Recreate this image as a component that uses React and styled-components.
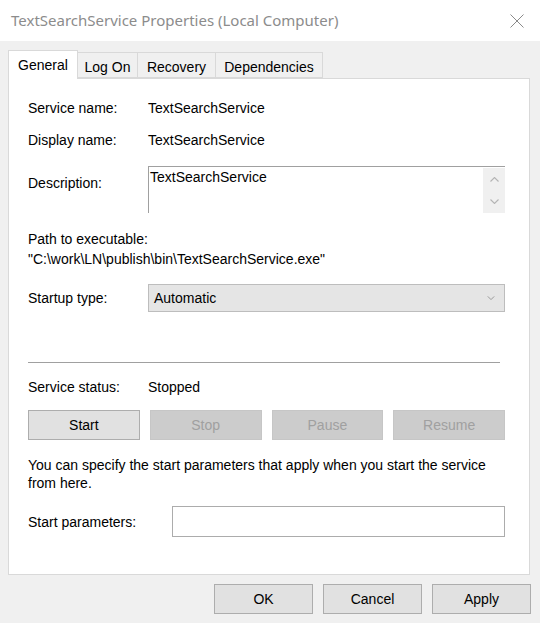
import React from "react";
import styled, { createGlobalStyle } from "styled-components";

const GlobalStyle = createGlobalStyle`
  html, body {
    margin: 0;
    padding: 0;
    background: #f0f0f0;
  }
  body {
    font-family: "Liberation Sans", Arial, sans-serif;
    font-size: 14px;
    color: #000;
  }
  * { box-sizing: border-box; }
`;

const Window = styled.div`
  width: 540px;
  height: 623px;
  background: #f0f0f0;
  display: flex;
  flex-direction: column;
  overflow: hidden;
`;

const TitleBar = styled.div`
  height: 41px;
  flex: none;
  background: #fff;
  display: flex;
  align-items: center;
  justify-content: space-between;
  padding: 0 16px 0 11px;
`;

const Title = styled.span`
  font-family: "Noto Sans", "Open Sans", sans-serif;
  font-size: 15px;
  color: #8c8c8c;
  padding-bottom: 1px;
`;

const CloseIcon = styled.svg`
  width: 14px;
  height: 14px;
  display: block;
`;

const Body = styled.div`
  padding: 9px 10px 0 8px;
`;

const TabStrip = styled.div`
  display: flex;
  align-items: flex-end;
  height: 28px;
`;

const Tab = styled.div`
  position: relative;
  width: ${(p) => p.$width}px;
  height: ${(p) => (p.$active ? 29 : 26)}px;
  margin-bottom: ${(p) => (p.$active ? -1 : 0)}px;
  margin-left: ${(p) => (p.$first ? 0 : -1)}px;
  padding-top: ${(p) => (p.$active ? 0 : 3)}px;
  z-index: ${(p) => (p.$active ? 2 : 1)};
  display: flex;
  align-items: center;
  justify-content: center;
  background: ${(p) => (p.$active ? "#fff" : "#f0f0f0")};
  border: 1px solid #d9d9d9;
  border-bottom: ${(p) => (p.$active ? "none" : "1px solid #d9d9d9")};
  white-space: nowrap;
`;

const Panel = styled.div`
  height: 497px;
  background: #fff;
  border: 1px solid #d9d9d9;
  padding: 21px 24px 0 19px;
  display: flex;
  flex-direction: column;
`;

const Field = styled.div`
  display: grid;
  grid-template-columns: ${(p) => p.$label || 120}px 1fr;
  align-items: ${(p) => (p.$top ? "start" : "center")};
  margin-top: ${(p) => p.$gap || 0}px;
  line-height: 16px;
`;

const Label = styled.span`
  padding-top: ${(p) => p.$offset || 0}px;
`;

const TextBlock = styled.div`
  margin-top: ${(p) => p.$gap || 0}px;
  line-height: ${(p) => p.$line || 16}px;
`;

const Memo = styled.div`
  height: 47px;
  display: flex;
  border-top: 1px solid #a0a0a0;
  border-left: 1px solid #a0a0a0;
  background: #fff;
`;

const MemoText = styled.div`
  flex: 1;
  padding: 2px 1px;
  line-height: 16px;
`;

const ScrollBar = styled.div`
  width: 22px;
  margin-top: 1px;
  background: #f0f0f0;
  display: flex;
  flex-direction: column;
`;

const ScrollButton = styled.div`
  flex: 1;
  display: flex;
  align-items: center;
  justify-content: center;
`;

const Chevron = styled.svg`
  width: ${(p) => p.$size || 9}px;
  height: ${(p) => Math.round((p.$size || 9) / 2)}px;
  display: block;
`;

const Combo = styled.div`
  height: 28px;
  display: flex;
  align-items: center;
  justify-content: space-between;
  padding: 0 9px 0 5px;
  background: #e5e5e5;
  border: 1px solid #bdbdbd;
`;

const Separator = styled.div`
  margin-top: ${(p) => p.$gap}px;
  margin-right: 5px;
  border-top: 1px solid #a0a0a0;
`;

const ButtonRow = styled.div`
  display: grid;
  grid-template-columns: repeat(4, 1fr);
  gap: 10px;
  margin-top: ${(p) => p.$gap}px;
`;

const Button = styled.button`
  height: 30px;
  width: ${(p) => (p.$width ? `${p.$width}px` : "auto")};
  font-family: "Liberation Sans", Arial, sans-serif;
  font-size: 14px;
  padding: 0;
  color: ${(p) => (p.disabled ? "#a0a0a0" : "#000")};
  background: ${(p) => (p.disabled ? "#cccccc" : "#e1e1e1")};
  border: 1px solid ${(p) => (p.disabled ? "#c6c6c6" : "#adadad")};
  border-radius: 0;
`;

const Input = styled.div`
  height: 31px;
  background: #fff;
  border: 1px solid #acacac;
`;

const Footer = styled.div`
  display: flex;
  justify-content: flex-end;
  gap: 10px;
  padding: 9px 9px 0 0;
`;

const tabs = [
  { name: "General", width: 70 },
  { name: "Log On", width: 61 },
  { name: "Recovery", width: 79 },
  { name: "Dependencies", width: 108 },
];

function ChevronUp() {
  return (
    <Chevron viewBox="0 0 9 5">
      <polyline points="0.5,4.5 4.5,0.5 8.5,4.5" fill="none" stroke="#b4b4b4" strokeWidth="1.1" />
    </Chevron>
  );
}

function ChevronDown({ color = "#b4b4b4", size }) {
  return (
    <Chevron viewBox="0 0 9 5" $size={size}>
      <polyline points="0.5,0.5 4.5,4.5 8.5,0.5" fill="none" stroke={color} strokeWidth="1.1" />
    </Chevron>
  );
}

export default function App() {
  return (
    <Window>
      <GlobalStyle />
      <TitleBar>
        <Title>TextSearchService Properties (Local Computer)</Title>
        <CloseIcon viewBox="0 0 14 14">
          <line x1="0.5" y1="0.5" x2="13.5" y2="13.5" stroke="#8a8a8a" strokeWidth="1" />
          <line x1="13.5" y1="0.5" x2="0.5" y2="13.5" stroke="#8a8a8a" strokeWidth="1" />
        </CloseIcon>
      </TitleBar>

      <Body>
        <TabStrip>
          {tabs.map((t, i) => (
            <Tab key={t.name} $width={t.width} $active={i === 0} $first={i === 0}>
              {t.name}
            </Tab>
          ))}
        </TabStrip>

        <Panel>
          <Field>
            <Label>Service name:</Label>
            <span>TextSearchService</span>
          </Field>
          <Field $gap={16}>
            <Label>Display name:</Label>
            <span>TextSearchService</span>
          </Field>
          <Field $gap={18} $top>
            <Label $offset={9}>Description:</Label>
            <Memo>
              <MemoText>TextSearchService</MemoText>
              <ScrollBar>
                <ScrollButton>
                  <ChevronUp />
                </ScrollButton>
                <ScrollButton>
                  <ChevronDown />
                </ScrollButton>
              </ScrollBar>
            </Memo>
          </Field>

          <TextBlock $gap={16} $line={20}>
            <div>Path to executable:</div>
            <div>"C:\work\LN\publish\bin\TextSearchService.exe"</div>
          </TextBlock>

          <Field $gap={15}>
            <Label>Startup type:</Label>
            <Combo>
              <span>Automatic</span>
              <ChevronDown color="#909090" size={8} />
            </Combo>
          </Field>

          <Separator $gap={50} />

          <Field $gap={16}>
            <Label>Service status:</Label>
            <span>Stopped</span>
          </Field>

          <ButtonRow $gap={15}>
            <Button>Start</Button>
            <Button disabled>Stop</Button>
            <Button disabled>Pause</Button>
            <Button disabled>Resume</Button>
          </ButtonRow>

          <TextBlock $gap={16} $line={18}>
            You can specify the start parameters that apply when you start the service
            from here.
          </TextBlock>

          <Field $gap={14} $label={144}>
            <Label>Start parameters:</Label>
            <Input />
          </Field>
        </Panel>
      </Body>

      <Footer>
        <Button $width={99}>OK</Button>
        <Button $width={99}>Cancel</Button>
        <Button $width={99}>Apply</Button>
      </Footer>
    </Window>
  );
}
